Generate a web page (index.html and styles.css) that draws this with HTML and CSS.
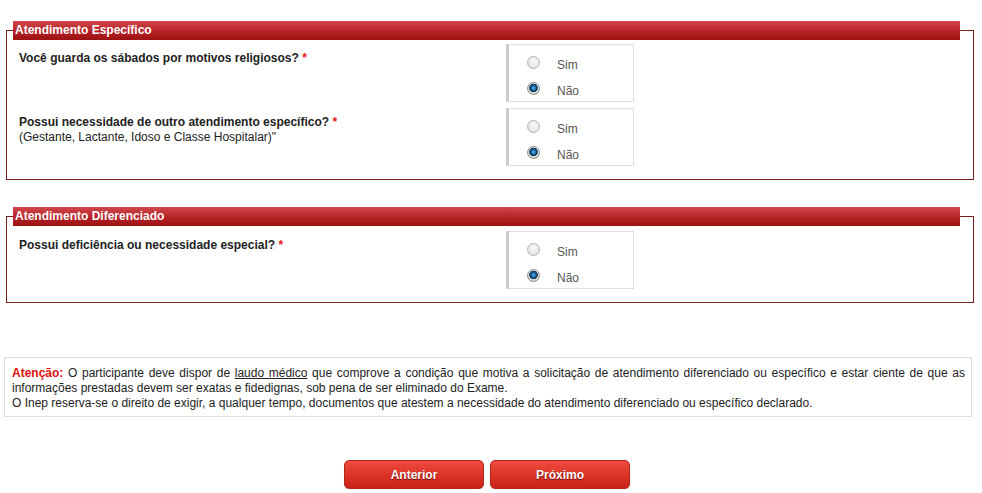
FILE: index.html
```html
<!DOCTYPE html>
<html lang="pt-BR">
<head>
    <meta charset="UTF-8">
    <title>Atendimento</title>
    <link rel="stylesheet" href="styles.css">
</head>
<body>
    <fieldset class="box">
        <legend class="box-title">Atendimento Específico</legend>

        <div class="row">
            <div class="question">Você guarda os sábados por motivos religiosos? <span class="req">*</span></div>
            <div class="options">
                <label class="option"><input type="radio" name="sabado"><span>Sim</span></label>
                <label class="option"><input type="radio" name="sabado" checked><span>Não</span></label>
            </div>
        </div>

        <div class="row">
            <div class="question">
                Possui necessidade de outro atendimento específico? <span class="req">*</span>
                <div class="hint">(Gestante, Lactante, Idoso e Classe Hospitalar)"</div>
            </div>
            <div class="options">
                <label class="option"><input type="radio" name="especifico"><span>Sim</span></label>
                <label class="option"><input type="radio" name="especifico" checked><span>Não</span></label>
            </div>
        </div>
    </fieldset>

    <fieldset class="box second">
        <legend class="box-title">Atendimento Diferenciado</legend>

        <div class="row">
            <div class="question">Possui deficiência ou necessidade especial? <span class="req">*</span></div>
            <div class="options">
                <label class="option"><input type="radio" name="deficiencia"><span>Sim</span></label>
                <label class="option"><input type="radio" name="deficiencia" checked><span>Não</span></label>
            </div>
        </div>
    </fieldset>

    <div class="notice">
        <p><strong class="alert">Atenção:</strong> O participante deve dispor de <a href="#">laudo médico</a> que comprove a condição que motiva a solicitação de atendimento diferenciado ou específico e estar ciente de que as informações prestadas devem ser exatas e fidedignas, sob pena de ser eliminado do Exame.</p>
        <p>O Inep reserva-se o direito de exigir, a qualquer tempo, documentos que atestem a necessidade do atendimento diferenciado ou específico declarado.</p>
    </div>

    <div class="actions">
        <button class="btn">Anterior</button>
        <button class="btn">Próximo</button>
    </div>
</body>
</html>
```

FILE: styles.css
```css
body {
    margin: 0;
    font-family: "Liberation Sans", Arial, sans-serif;
    font-size: 12px;
    color: #222;
    background: #fff;
}

.box {
    margin: 21px 8px 0 6px;
    padding: 0 12px 13px 12px;
    border: 1px solid #7a1c1c;
    min-width: 0;
}

.box.second {
    margin-top: 27px;
}

.box-title {
    box-sizing: border-box;
    width: 947px;
    height: 19px;
    margin-left: -6px;
    padding: 0 0 0 2px;
    line-height: 19px;
    font-weight: bold;
    color: #fff;
    background: linear-gradient(#d2474c, #b52127 55%, #9c1212);
}

.row {
    display: flex;
    margin-top: 4px;
}

.row + .row {
    margin-top: 6px;
}

.second .row {
    margin-top: 5px;
}

.question {
    width: 487px;
    padding-top: 7px;
    font-weight: bold;
    line-height: 15px;
}

.req {
    color: #e02020;
}

.hint {
    font-weight: normal;
}

.options {
    box-sizing: border-box;
    width: 128px;
    height: 58px;
    padding: 8px 0 0 18px;
    border: 1px solid #ddd;
    border-left: 3px solid #ccc;
}

.option {
    display: flex;
    align-items: center;
    height: 20px;
    margin-bottom: 6px;
    color: #555;
}

.option span {
    padding-top: 3px;
}

.option input {
    appearance: none;
    -webkit-appearance: none;
    width: 13px;
    height: 13px;
    margin: -2px 17px 0 0;
    border: 1px solid #b2b2b2;
    border-radius: 50%;
    background: radial-gradient(circle at 50% 35%, #fafafa, #dcdcdc);
}

.option input:checked {
    border-color: #8c8c8c;
    background: radial-gradient(circle at 50% 45%, #6fc0f0 0, #1d6aa6 2px, #123e66 3.5px, #2a3d50 4px, #e6e6e6 4.6px, #c9c9c9 6px);
}

.notice {
    margin: 54px 10px 0 4px;
    padding: 8px 6px 5px 7px;
    border: 1px solid #ddd;
    line-height: 15px;
    text-align: justify;
}

.notice p {
    margin: 0;
}

.alert {
    color: #e01010;
}

.notice a {
    color: #222;
    text-decoration: underline;
}

.actions {
    display: flex;
    justify-content: center;
    gap: 6px;
    margin-top: 43px;
    padding-right: 8px;
}

.btn {
    width: 140px;
    height: 29px;
    border: 1px solid #b3241b;
    border-radius: 5px;
    background: linear-gradient(#ef4a3f, #dc3428 50%, #c92218);
    color: #fff;
    font-family: "Liberation Sans", Arial, sans-serif;
    font-size: 12px;
    font-weight: bold;
    text-shadow: 0 1px 1px #6a0d08;
    box-shadow: 0 1px 1px rgba(0, 0, 0, 0.15);
    cursor: pointer;
}
```
